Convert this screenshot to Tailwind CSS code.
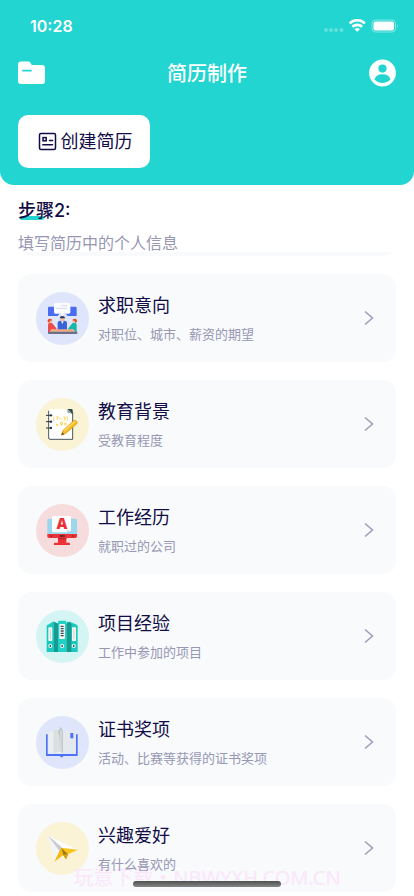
<!DOCTYPE html>
<html lang="zh-CN">
<head>
<meta charset="utf-8">
<meta name="viewport" content="width=device-width, initial-scale=1">
<title>简历制作</title>
<script src="https://cdn.jsdelivr.net/npm/@tailwindcss/browser@4"></script>
</head>
<body class="relative min-h-screen bg-white pb-1 font-['Inter','Noto_Sans_CJK_SC',sans-serif] text-[#120c46]">

<header class="rounded-b-[14px] bg-[#22d5d0] px-[18px] pb-[17px] text-white">
  <div class="flex h-[52px] items-center justify-between pl-3">
    <span class="text-base font-semibold">10:28</span>
    <svg class="-mr-0.5 h-5 w-[76px]" viewBox="0 0 76 20" fill="none" aria-hidden="true">
      <g fill="#fff" opacity=".3"><circle cx="4" cy="14" r="1.9"/><circle cx="9" cy="14" r="1.9"/><circle cx="14" cy="14" r="1.9"/><circle cx="19.500" cy="14" r="1.9"/></g>
      <g stroke="#fff" stroke-width="2.600"><path d="M27.600 7.400a11 11 0 0 1 15.300 0"/><path d="M30.400 10.800a7 7 0 0 1 9.700 0"/></g>
      <path d="M35.250 15.800l-2.600-2.600a3.800 3.800 0 0 1 5.200 0z" fill="#fff"/>
      <rect x="50" y="4" width="23.500" height="12" rx="3.500" stroke="#fff" stroke-opacity=".45"/>
      <rect x="51.500" y="5.500" width="20.500" height="9" rx="2" fill="#fff"/>
      <path d="M75 8.200q1.500 1.800 0 3.600z" fill="#fff" opacity=".5"/>
    </svg>
  </div>
  <div class="flex h-[42px] items-center justify-between">
    <button type="button" aria-label="文件夹" class="w-7">
      <svg class="h-7 w-7" viewBox="0 0 28 28" aria-hidden="true"><path d="M3 2.500h7.500q1 0 1.700 1l1.500 2.500H24q3 0 3 3v13q0 3-3 3H3q-3 0-3-3V5.500q0-3 3-3z" fill="#fff"/><path d="M5 11.700h8" stroke="#22d5d0" stroke-width="1.800" stroke-linecap="round"/></svg>
    </button>
    <h1 class="pt-0.5 text-xl font-medium">简历制作</h1>
    <button type="button" aria-label="个人中心" class="w-7">
      <svg class="h-7 w-7" viewBox="0 0 28 28" aria-hidden="true"><circle cx="14.500" cy="14" r="13.400" fill="#fff"/><circle cx="14.500" cy="9.600" r="4.100" fill="#22d5d0"/><path d="M6.500 20.200c1.500-3.800 4.500-5 8-5s6.500 1.200 8 5c-2 2.500-5 3.800-8 3.800s-6-1.300-8-3.800z" fill="#22d5d0"/></svg>
    </button>
  </div>
  <button type="button" class="mt-[21px] flex h-[53px] w-[132px] items-center justify-center gap-1 rounded-[10px] bg-white pl-0.5 text-lg text-[#120c46]">
    <svg class="h-[19px] w-[19px]" viewBox="0 0 19 19" fill="none" stroke="currentColor" stroke-width="1.500" stroke-linecap="round" aria-hidden="true"><rect x="1.500" y="1.500" width="16" height="16" rx="1.500"/><rect x="5" y="5.600" width="3.200" height="3.200"/><path d="M11.500 8.500h3M4.800 12.700h9.700"/></svg>
    <span>创建简历</span>
  </button>
</header>

<main>
  <section class="px-[18px] pt-3">
    <h2 class="relative isolate w-fit text-lg leading-[27px] font-medium">
      <span class="absolute bottom-1 left-0.5 -z-10 h-1 w-6 rounded-full bg-[#22d5d0]"></span>步骤2:
    </h2>
    <p class="mt-[7px] h-[21px] text-base leading-6 text-[#9797b4]">填写简历中的个人信息</p>
  </section>

  <div class="flex flex-col gap-[18px] px-[18px]">
    <div class="flex h-1 items-end overflow-hidden" aria-hidden="true"><div class="h-[88px] w-full shrink-0 rounded-[13px] bg-[#f8fafc]"></div></div>

    <a href="#intention" class="flex h-[88px] items-center rounded-[13px] bg-[#f8fafc] pr-[22px] pl-[18px]">
      <svg class="size-[53px] shrink-0" viewBox="78 66 159 159" aria-hidden="true">
        <circle cx="157.500" cy="145.500" r="79.500" fill="#dfe5fb"/>
        <path d="M117 110h79q4 0 4 4v24h-27l-5-6h-20l-5 6h-29v-24q0-4 3-4z" fill="#4a6cf0"/>
        <path d="M136 98h41q4 0 4 4v25q0 4-4 4h-14l-5 8-7-8h-15q-4 0-4-4v-25q0-4 4-4z" fill="#fbfcff"/>
        <path d="M152 107h19M138 115h33" stroke="#c3c8d8" stroke-width="2"/>
        <path d="M143 180v-20q0-8 8-8h12q8 0 8 8v20z" fill="#3c62d8"/>
        <circle cx="157" cy="148" r="6" fill="#f3bfa0"/><path d="M149 145q1-7 8-7t9 7z" fill="#26365c"/>
        <path d="M153 154l4 8 4-8z" fill="#fff"/>
        <path d="M114 190v-25q0-7 8-7 6 0 9 7l8 10q3 6-4 6l-10-4v13z" fill="#ee4b4b"/>
        <circle cx="121" cy="153" r="6" fill="#f3bfa0"/><path d="M113 155q-1-9 7-9 6 0 7 5l-7 1-2 7z" fill="#e24c30"/>
        <path d="M200 190v-25q0-7-8-7-6 0-9 7l-8 10q-3 6 4 6l10-4v13z" fill="#15b8a6"/>
        <circle cx="193" cy="153" r="6" fill="#f3bfa0"/><path d="M201 155q1-9-7-9-6 0-7 5l7 1 2 7z" fill="#d84c30"/>
        <path d="M124 178h67l6 9h-79z" fill="#f0aa88"/><path d="M114 185h88v4q0 3-3 3h-82q-3 0-3-3z" fill="#68718b"/>
      </svg>
      <div class="ml-[9px] flex-1 pt-1">
        <h3 class="text-lg leading-6">求职意向</h3>
        <p class="mt-1 text-[13px] leading-6 text-[#9797b4]">对职位、城市、薪资的期望</p>
      </div>
      <svg class="h-4 w-[10px]" viewBox="0 0 10 16" fill="none" stroke="#9c9cb8" stroke-width="1.500" aria-hidden="true"><path d="M1 1.500L8.500 8 1 14.500"/></svg>
    </a>

    <a href="#education" class="flex h-[88px] items-center rounded-[13px] bg-[#f8fafc] pr-[22px] pl-[18px]">
      <svg class="size-[53px] shrink-0" viewBox="78 66 159 159" aria-hidden="true">
        <circle cx="157.500" cy="145.500" r="79.500" fill="#fbf3d5"/>
        <path d="M119 100h55l13 13v75q0 3-3 3h-65q-3 0-3-3v-85q0-3 3-3z" fill="#fff"/>
        <path d="M116 104v82q0 4 4 4h68v-82" fill="none" stroke="#28363b" stroke-width="2.500"/>
        <path d="M172 99h12q4 0 4 4v12z" fill="#33484d"/><path d="M172 99v8q0 4 5 4l11 4z" fill="#94aaa9"/>
        <path d="M108 118h15M108 137h15M108 156h15" stroke="#26363c" stroke-width="3"/>
        <g fill="#26363c"><circle cx="123" cy="118" r="3.500"/><circle cx="123" cy="137" r="3.500"/><circle cx="123" cy="156" r="3.500"/></g>
        <g fill="none" stroke="#fac71f" stroke-width="2.200"><path d="M132 122q-5 6 0 12M138 123h7l-4 9M149 128h6M160 123h5q3 4-2 5 5 2 1 5h-4M171 121q5 7 0 13M138 144l6 5M144 144l-6 5M151 141q0-4 5-3 4 2 0 7-6 1-5-4M157 143q0 5-5 7M162 142h8M162 146h8"/></g>
        <path d="M154 178l5-15 33-30q4-2 8 3 3 4 1 7l-33 29z" fill="#f8b91f" stroke="#c98c16" stroke-width="1.500"/>
        <path d="M161 163l33-29 3 3-33 30z" fill="#ffd65a"/><path d="M154 178l3-9 6 6z" fill="#6b4b25"/>
      </svg>
      <div class="ml-[9px] flex-1 pt-1">
        <h3 class="text-lg leading-6">教育背景</h3>
        <p class="mt-1 text-[13px] leading-6 text-[#9797b4]">受教育程度</p>
      </div>
      <svg class="h-4 w-[10px]" viewBox="0 0 10 16" fill="none" stroke="#9c9cb8" stroke-width="1.500" aria-hidden="true"><path d="M1 1.500L8.500 8 1 14.500"/></svg>
    </a>

    <a href="#work" class="flex h-[88px] items-center rounded-[13px] bg-[#f8fafc] pr-[22px] pl-[18px]">
      <svg class="size-[53px] shrink-0" viewBox="78 66 159 159" aria-hidden="true">
        <circle cx="157.500" cy="145.500" r="79.500" fill="#f7dcdd"/>
        <path d="M116 110h81q4 0 4 4v43h-89v-43q0-4 4-4z" fill="#9ad7ee"/>
        <path d="M112 156h89v7q0 5-5 5h-79q-5 0-5-5z" fill="#ed3237"/>
        <path d="M144 168h25v14h9q2 0 2 3v4h-48v-4q0-3 2-3h10z" fill="#ed3237"/><path d="M144 168h25v4h-25z" fill="#bd252a"/>
        <path d="M130 102h49q4 0 4 4v40l-13 5H130q-4 0-4-4v-41q0-4 4-4z" fill="#fff"/><path d="M170 151v-7l13 2z" fill="#d6e1e6"/>
        <text x="156" y="140" text-anchor="middle" font-family="Open Sans, sans-serif" font-weight="800" font-size="45" fill="#ed3237">A</text>
        <g fill="#74272d"><circle cx="124" cy="162" r="2.500"/><rect x="148" y="159" width="17" height="6" rx="3"/><circle cx="189" cy="162" r="2.500"/></g>
      </svg>
      <div class="ml-[9px] flex-1 pt-1">
        <h3 class="text-lg leading-6">工作经历</h3>
        <p class="mt-1 text-[13px] leading-6 text-[#9797b4]">就职过的公司</p>
      </div>
      <svg class="h-4 w-[10px]" viewBox="0 0 10 16" fill="none" stroke="#9c9cb8" stroke-width="1.500" aria-hidden="true"><path d="M1 1.500L8.500 8 1 14.500"/></svg>
    </a>

    <a href="#project" class="flex h-[88px] items-center rounded-[13px] bg-[#f8fafc] pr-[22px] pl-[18px]">
      <svg class="size-[53px] shrink-0" viewBox="78 66 159 159" aria-hidden="true">
        <circle cx="157.500" cy="145.500" r="79.500" fill="#d5f5f4"/>
        <path d="M110 115q0-4 4-5l15-9q4-1 6 2l10 4v85h-35z" fill="#1ccabd"/><path d="M132 102l13 5v85h-13z" fill="#159b91"/>
        <path d="M170 102l10-1 20 9q3 2 3 5v77h-33z" fill="#1ccabd"/><path d="M169 107l9-5 6 7v83h-15z" fill="#159b91"/>
        <path d="M144 102q0-4 4-4h17q4 0 4 4v90h-25z" fill="#20d1c5"/>
        <rect x="115" y="118" width="12" height="41" rx="2" fill="#f4f6f6"/><rect x="148" y="108" width="17" height="45" rx="2" fill="#f6f7f7"/><rect x="186" y="118" width="12" height="41" rx="2" fill="#f4f6f6"/>
        <path d="M121 124v29M192 124v29" stroke="#d0cfca" stroke-width="3"/>
        <path d="M156.500 113v35" stroke="#40464f" stroke-width="9" stroke-dasharray="4 3"/>
        <g fill="#33404c" stroke="#e9fffc" stroke-width="3.500"><circle cx="121" cy="174" r="4.500"/><circle cx="156.500" cy="174" r="4.500"/><circle cx="191" cy="174" r="4.500"/></g>
      </svg>
      <div class="ml-[9px] flex-1 pt-1">
        <h3 class="text-lg leading-6">项目经验</h3>
        <p class="mt-1 text-[13px] leading-6 text-[#9797b4]">工作中参加的项目</p>
      </div>
      <svg class="h-4 w-[10px]" viewBox="0 0 10 16" fill="none" stroke="#9c9cb8" stroke-width="1.500" aria-hidden="true"><path d="M1 1.500L8.500 8 1 14.500"/></svg>
    </a>

    <a href="#awards" class="flex h-[88px] items-center rounded-[13px] bg-[#f8fafc] pr-[22px] pl-[18px]">
      <svg class="size-[53px] shrink-0" viewBox="78 65 159 159" aria-hidden="true">
        <circle cx="157.500" cy="144.500" r="79.500" fill="#dfe5fb"/>
        <path d="M116 114q20-7 40 0v64q-20-5-40 0z" fill="#ebefef"/><path d="M156 114q20-7 40 0v64q-20-5-40 0z" fill="#e4e9ee"/>
        <path d="M130 108l20-2v66l-20 3z" fill="#dce0e0"/><path d="M143 113l9-15q7 5 7 15v64l-8-6q-1-50-8-58z" fill="#c4c9ca"/><path d="M153 110v64" stroke="#dfe3e3" stroke-width="3"/>
        <path d="M181 116h9v16h-9z" fill="#4d72f5"/>
        <path d="M108 120h5v59h85v-59h5v65h-43q-1 4-5 4t-5-4h-42z" fill="#4d72f5"/>
      </svg>
      <div class="ml-[9px] flex-1 pt-1">
        <h3 class="text-lg leading-6">证书奖项</h3>
        <p class="mt-1 text-[13px] leading-6 text-[#9797b4]">活动、比赛等获得的证书奖项</p>
      </div>
      <svg class="h-4 w-[10px]" viewBox="0 0 10 16" fill="none" stroke="#9c9cb8" stroke-width="1.500" aria-hidden="true"><path d="M1 1.500L8.500 8 1 14.500"/></svg>
    </a>

    <a href="#hobby" class="flex h-[88px] items-center rounded-[13px] bg-[#f8fafc] pr-[22px] pl-[18px]">
      <svg class="size-[53px] shrink-0" viewBox="107 76 159 159" aria-hidden="true">
        <circle cx="186.500" cy="155.500" r="79.500" fill="#fbf3d5"/>
        <path d="M142 116l91 44-49-6z" fill="#fdfdfd"/><path d="M142 116l21 79 19-42z" fill="#f4f5f6"/>
        <path d="M142 116l42 36-7 10z" fill="#c8cbd0"/>
        <path d="M182 153l51 6-36 16z" fill="#fac41b"/><path d="M182 153l-20 42 27-20z" fill="#f8b90f"/>
        <path d="M182 153l7 22 8 13 6-15z" fill="#a07912"/><path d="M189 175l14-4-6 17z" fill="#dda216"/>
      </svg>
      <div class="relative z-10 ml-[9px] flex-1 pt-1">
        <h3 class="text-lg leading-6">兴趣爱好</h3>
        <p class="mt-1 text-[13px] leading-6 text-[#9797b4]">有什么喜欢的</p>
      </div>
      <svg class="h-4 w-[10px]" viewBox="0 0 10 16" fill="none" stroke="#9c9cb8" stroke-width="1.500" aria-hidden="true"><path d="M1 1.500L8.500 8 1 14.500"/></svg>
    </a>
  </div>
</main>

<div class="pointer-events-none absolute inset-x-0 bottom-1 text-center font-['Noto_Sans','Noto_Sans_CJK_SC',sans-serif] text-xl leading-7 whitespace-nowrap text-[#fbe6fa]">玩意下载・NBWYXH.COM.CN</div>
<div class="absolute bottom-[9px] left-1/2 z-20 h-1.5 w-[148px] -translate-x-1/2 rounded-full bg-gradient-to-b from-[#4f5151] to-[#858787]"></div>
</body>
</html>
